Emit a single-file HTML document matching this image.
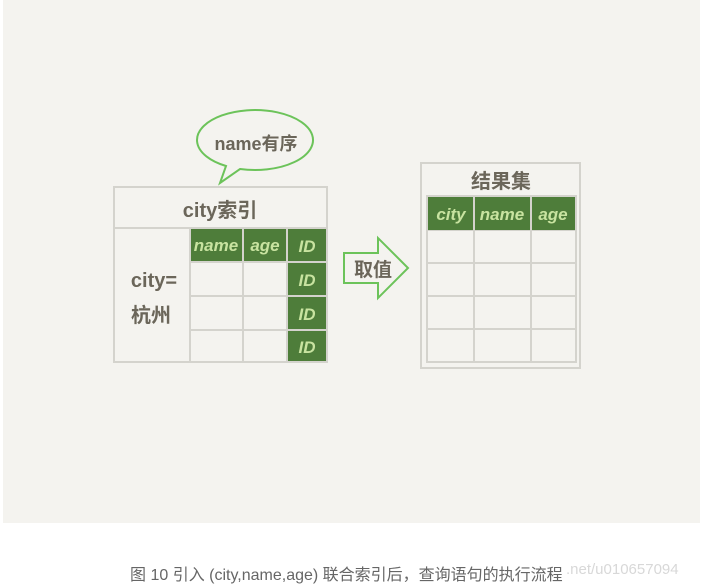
<!DOCTYPE html><html><head><meta charset="utf-8"><style>
body{margin:0;width:702px;height:587px;background:#fff;overflow:hidden;font-family:"Liberation Sans","Noto Sans CJK SC",sans-serif}
.bg{position:absolute;left:3px;top:0;width:697px;height:523px;background:#f4f3ef}
.cap{position:absolute;left:130px;top:561px;white-space:nowrap;font-size:16px;color:#666}
.wm{position:absolute;left:566px;top:561px;font-size:15px;color:#d8d8d8}
svg text{font-family:"Liberation Sans","Noto Sans CJK SC",sans-serif}
</style></head><body>
<div class="bg"></div>
<svg style="position:absolute;left:0;top:0" width="702" height="523">
<g stroke="#d4d3cd" stroke-width="2" fill="none">
<rect x="114" y="187" width="213" height="175"/>
<line x1="114" y1="228" x2="327" y2="228"/>
<line x1="190" y1="228" x2="190" y2="362"/>
<line x1="243" y1="228" x2="243" y2="362"/>
<line x1="287" y1="228" x2="287" y2="362"/>
<line x1="190" y1="262" x2="327" y2="262"/>
<line x1="190" y1="296" x2="327" y2="296"/>
<line x1="190" y1="330" x2="327" y2="330"/>
</g>
<g fill="#4e7d3a">
<rect x="191" y="229" width="51" height="32"/>
<rect x="244" y="229" width="42" height="32"/>
<rect x="288" y="229" width="38" height="32"/>
<rect x="288" y="263" width="38" height="32"/>
<rect x="288" y="297" width="38" height="32"/>
<rect x="288" y="331" width="38" height="30"/>
</g>
<g fill="#c8e3a0" font-size="17" font-weight="bold" text-anchor="middle" font-style="italic">
<text x="216" y="251">name</text><text x="265" y="251">age</text>
<text x="307" y="252">ID</text><text x="307" y="286">ID</text><text x="307" y="320">ID</text><text x="307" y="353">ID</text>
</g>
<g fill="#6b665a" font-size="20" font-weight="bold" text-anchor="middle">
<text x="220" y="217">city索引</text>
<text x="154" y="287">city=</text>
<text x="151" y="322">杭州</text>
<text x="501" y="188">结果集</text>
</g>
<path d="M220 183 L226 166 A58 30 0 1 1 240 169 Z" fill="#f4f3ef" stroke="#6cc35a" stroke-width="2"/>
<text x="256" y="150" font-size="18" font-weight="bold" fill="#6b665a" text-anchor="middle">name有序</text>
<path d="M344 253 H378 V238 L408 268 L378 298 V283 H344 Z" fill="#f4f3ef" stroke="#6cc35a" stroke-width="2"/>
<text x="373" y="276" font-size="19" font-weight="bold" fill="#6b665a" text-anchor="middle">取值</text>
<g stroke="#d4d3cd" stroke-width="2" fill="none">
<rect x="421" y="163" width="159" height="205"/>
<rect x="427" y="196" width="149" height="166"/>
<line x1="474" y1="196" x2="474" y2="362"/>
<line x1="531" y1="196" x2="531" y2="362"/>
<line x1="427" y1="230" x2="576" y2="230"/>
<line x1="427" y1="263" x2="576" y2="263"/>
<line x1="427" y1="296" x2="576" y2="296"/>
<line x1="427" y1="329" x2="576" y2="329"/>
</g>
<g fill="#4e7d3a">
<rect x="428" y="197" width="45" height="33"/>
<rect x="475" y="197" width="55" height="33"/>
<rect x="532" y="197" width="43" height="33"/>
</g>
<g fill="#c8e3a0" font-size="17" font-weight="bold" text-anchor="middle" font-style="italic">
<text x="451" y="220">city</text><text x="502" y="220">name</text><text x="553" y="220">age</text>
</g>
</svg>
<div class="cap">图 10 引入 (city,name,age) 联合索引后，查询语句的执行流程</div>
<div class="wm">.net/u010657094</div>
</body></html>
